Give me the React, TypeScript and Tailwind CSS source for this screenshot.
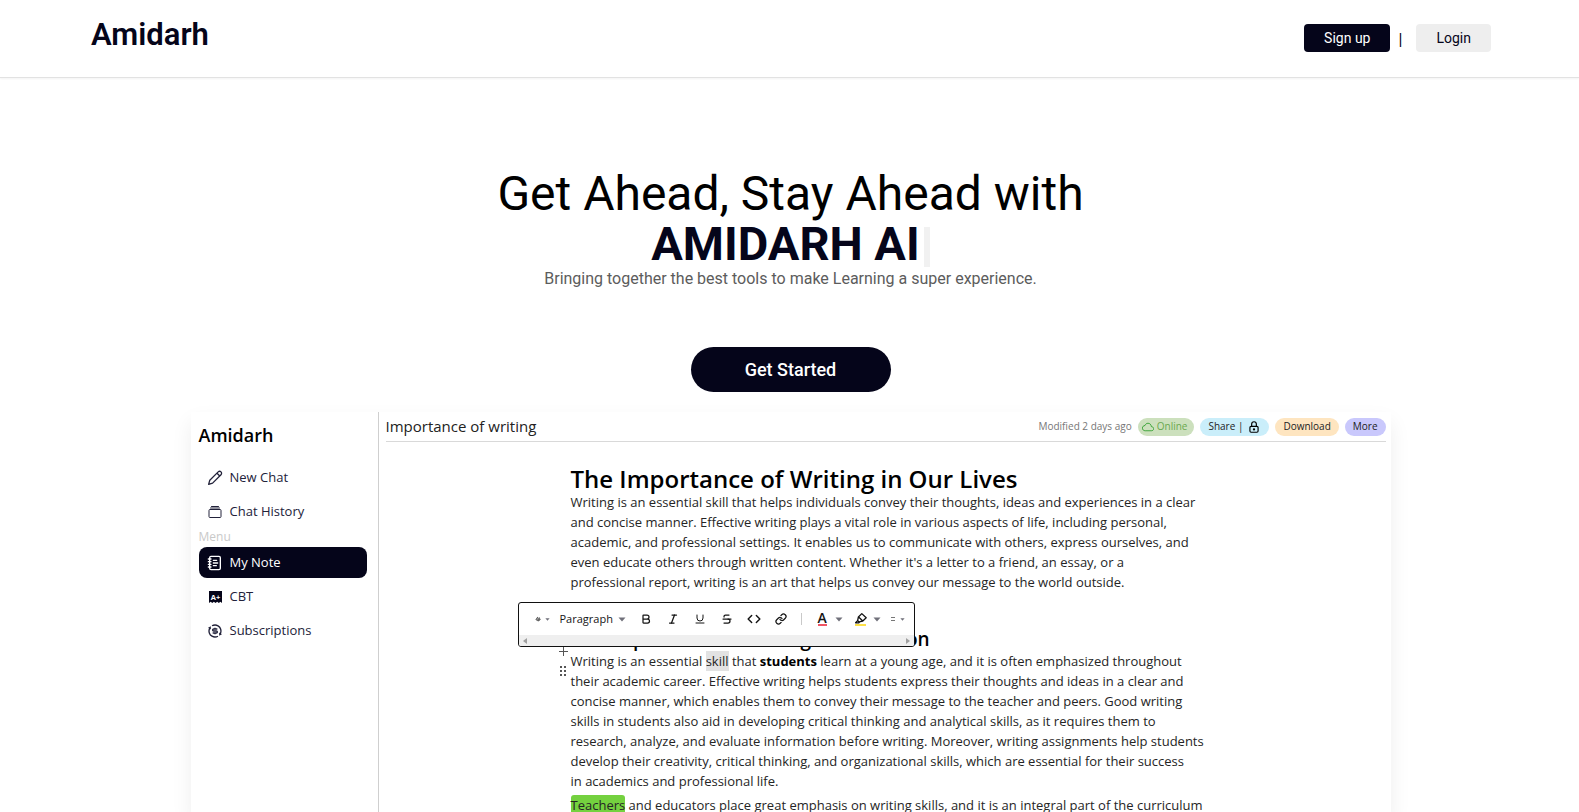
import type { ReactNode } from 'react';
import { IoAlbumsOutline, IoCloudOutline } from 'react-icons/io5';
import { RiExchangeDollarLine } from 'react-icons/ri';
import { TbLock } from 'react-icons/tb';
import { LuBold, LuCode, LuItalic, LuLink, LuNotebookText, LuStrikethrough, LuUnderline } from 'react-icons/lu';

function PencilIcon() {
  return (
    <svg viewBox="0 0 16 16" className="size-4" fill="none" stroke="currentColor" strokeWidth="1.3" strokeLinejoin="round" aria-hidden="true">
      <path d="M11.2 1.9a1.9 1.9 0 0 1 2.8 2.8L5.600 13.100 1.600 14.400 2.800 10.300z" />
      <path d="M10 3.200l2.800 2.800" />
    </svg>
  );
}

function GradeIcon() {
  return (
    <svg viewBox="0 0 16 16" className="size-4" aria-hidden="true">
      <path d="M2 2h13v12l-1.600-1.200-1.600 1.200-1.600-1.200L8.500 14l-1.600-1.200L5.300 14l-1.600-1.200L2 14z" fill="#05051a" />
      <text x="8.500" y="10.500" textAnchor="middle" fontSize="7.500" fontWeight="700" fill="#fff" fontFamily="Open Sans, sans-serif">A+</text>
    </svg>
  );
}

function HighlighterIcon() {
  return (
    <svg viewBox="0 0 16 16" className="size-4" aria-hidden="true">
      <path
        d="M4.600 9.600 5.400 6l3.400-3.400 4.400 4.200-3.400 3.200-3.600.8M5.600 6l4.200 4M2.600 11.800l2-2.200 1.800 1.600-.8.700z"
        fill="none"
        stroke="#111"
        strokeWidth="1.300"
        strokeLinejoin="round"
      />
      <path d="M2 13h11v2H2z" fill="#fde047" />
    </svg>
  );
}

function Caret({ small = false }: { small?: boolean }) {
  return (
    <svg viewBox="0 0 8 5" className={small ? 'h-[3px] w-[5px]' : 'h-[5px] w-2'} aria-hidden="true">
      <path d="M.5.500h7L4 4.500z" fill="#70707a" />
    </svg>
  );
}

function SideItem({ icon, label, active = false }: { icon: ReactNode; label: string; active?: boolean }) {
  return (
    <li>
      <a
        href="#"
        className={
          active
            ? 'flex h-[31px] items-center gap-[7px] rounded-lg bg-[#05051a] px-2 text-white'
            : 'flex h-[31px] items-center gap-[7px] px-2 text-[#22223a]'
        }
      >
        {icon}
        {label}
      </a>
    </li>
  );
}

function Tool({ label, children }: { label: string; children: ReactNode }) {
  return (
    <button type="button" aria-label={label} className="flex h-6 w-[27px] items-center justify-center">
      {children}
    </button>
  );
}

function Toolbar() {
  return (
    <div className="absolute top-[137px] -left-[53px] w-[397px] overflow-hidden rounded-[3px] border border-[#111] bg-white text-[#151515]">
      <div className="flex h-8 items-center pl-4">
        <button type="button" aria-label="Style" className="flex items-center gap-1">
          <svg viewBox="0 0 6 6" className="size-1.5" aria-hidden="true">
            <path d="M.8 3.800 3 1.200M1.800 4.800 4.800 1.600M3.200 5.200 5.400 3" stroke="#555" strokeWidth="1.100" />
          </svg>
          <Caret small />
        </button>
        <button type="button" className="ml-2.5 flex w-[66px] items-center justify-between text-[11px]">
          Paragraph
          <Caret />
        </button>
        <div className="ml-[7px] flex items-center">
          <Tool label="Bold"><LuBold className="size-3" strokeWidth={2.500} /></Tool>
          <Tool label="Italic"><LuItalic className="size-3" strokeWidth={2.500} /></Tool>
          <Tool label="Underline"><LuUnderline className="size-3" /></Tool>
          <Tool label="Strikethrough"><LuStrikethrough className="size-3" strokeWidth={2.500} /></Tool>
          <Tool label="Code"><LuCode className="size-3.5" strokeWidth={2.500} /></Tool>
          <Tool label="Link"><LuLink className="size-3" strokeWidth={2.500} /></Tool>
        </div>
        <span className="ml-1.5 h-3 w-px bg-[#c9c9c9]" />
        <button type="button" aria-label="Text colour" className="ml-4 flex items-center gap-2">
          <span className="border-b-2 border-[#ef5565] text-sm leading-3 font-semibold">A</span>
          <Caret />
        </button>
        <button type="button" aria-label="Highlight" className="ml-2.5 flex items-center gap-1">
          <HighlighterIcon />
          <Caret />
        </button>
        <button type="button" aria-label="Alignment" className="ml-2.5 flex items-center gap-1">
          <svg viewBox="0 0 5 4" className="h-1 w-[5px]" aria-hidden="true">
            <path d="M0 .5h4M0 3.500h4" stroke="#777" />
          </svg>
          <Caret small />
        </button>
      </div>
      <div className="flex h-[11px] items-center justify-between bg-[#efefef] px-1" aria-hidden="true">
        <svg viewBox="0 0 4 6" className="h-1.5 w-1"><path d="M4 0v6L0 3z" fill="#a0a0a0" /></svg>
        <svg viewBox="0 0 4 6" className="h-1.5 w-1"><path d="M0 0v6l4-3z" fill="#a0a0a0" /></svg>
      </div>
    </div>
  );
}

function Handles() {
  return (
    <div className="absolute top-[182px] -left-3 flex flex-col items-center gap-2.5" aria-hidden="true">
      <svg viewBox="0 0 9 9" className="size-[9px]"><path d="M4.500 0v9M0 4.500h9" stroke="#555" /></svg>
      <svg viewBox="0 0 6 10" className="h-2.5 w-1.5" fill="#555">
        <path d="M0 0h2v2H0zM4 0h2v2H4zM0 4h2v2H0zM4 4h2v2H4zM0 8h2v2H0zM4 8h2v2H4z" />
      </svg>
    </div>
  );
}

function Lines({ lines }: { lines: string[] }) {
  return (
    <>
      {lines.map((line) => (
        <span key={line} className="block">{line}</span>
      ))}
    </>
  );
}

const intro = [
  'Writing is an essential skill that helps individuals convey their thoughts, ideas and experiences in a clear',
  'and concise manner. Effective writing plays a vital role in various aspects of life, including personal,',
  'academic, and professional settings. It enables us to communicate with others, express ourselves, and',
  "even educate others through written content. Whether it's a letter to a friend, an essay, or a",
  'professional report, writing is an art that helps us convey our message to the world outside.',
];

const education = [
  'their academic career. Effective writing helps students express their thoughts and ideas in a clear and',
  'concise manner, which enables them to convey their message to the teacher and peers. Good writing',
  'skills in students also aid in developing critical thinking and analytical skills, as it requires them to',
  'research, analyze, and evaluate information before writing. Moreover, writing assignments help students',
  'develop their creativity, critical thinking, and organizational skills, which are essential for their success',
  'in academics and professional life.',
];

function Preview() {
  return (
    <section className="mx-auto mt-5 flex max-w-[1200px] bg-white font-['Open_Sans',sans-serif] shadow-[0_10px_20px_rgba(0,0,0,0.07)]">
      <aside className="w-[188px] shrink-0 border-r border-[#cfcfcf] pr-[11px] pl-2 text-[13px]">
        <h2 className="pt-2 text-lg leading-[30px] font-semibold text-black">Amidarh</h2>
        <ul className="mt-3 flex flex-col gap-[3px]">
          <SideItem icon={<PencilIcon />} label="New Chat" />
          <SideItem icon={<IoAlbumsOutline className="size-4" />} label="Chat History" />
        </ul>
        <p className="text-xs leading-5 text-[#c9c9c9]">Menu</p>
        <ul className="flex flex-col gap-[3px]">
          <SideItem active icon={<LuNotebookText className="size-4" />} label="My Note" />
          <SideItem icon={<GradeIcon />} label="CBT" />
          <SideItem icon={<RiExchangeDollarLine className="size-4" />} label="Subscriptions" />
        </ul>
      </aside>
      <div className="min-w-0 grow pr-[5px] pl-[7px]">
        <header className="flex h-[30px] items-center justify-between border-b border-[#d9d9d9] text-[10px] text-[#222]">
          <h2 className="text-[15px] text-[#222]">Importance of writing</h2>
          <div className="flex items-center gap-1.5">
            <span className="text-[#777]">Modified 2 days ago</span>
            <span className="flex h-[18px] items-center gap-[3px] rounded-full bg-[#cce0bd] pr-[7px] pl-1 text-[#6aa84f]">
              <IoCloudOutline className="size-3 text-[#159415]" />
              Online
            </span>
            <button type="button" className="flex h-[18px] items-center gap-1 rounded-full bg-[#caeefa] px-2">
              Share |
              <TbLock className="size-[14px] text-black" />
            </button>
            <button type="button" className="h-[18px] rounded-full bg-[#fee5c0] px-2">Download</button>
            <button type="button" className="h-[18px] rounded-full bg-[#c9c8fc] px-2">More</button>
          </div>
        </header>
        <article className="relative mx-auto mt-[23px] max-w-[630px] text-[13px] leading-5 whitespace-nowrap text-[#252525]">
          <h1 className="text-2xl leading-[27px] font-semibold text-black">The Importance of Writing in Our Lives</h1>
          <p><Lines lines={intro} /></p>
          <h2 className="mt-[35px] text-[19px] leading-6 font-semibold text-black">The Importance of Writing in Education</h2>
          <p>
            Writing is an essential <span className="bg-[#e2e2e2] py-px">skill</span> that{' '}
            <strong className="text-black">students</strong> learn at a young age, and it is often emphasized throughout
            <Lines lines={education} />
          </p>
          <p className="mt-1">
            <mark className="rounded-[3px] bg-[#74d13f] py-px text-[#252525]">Teachers</mark> and educators place great emphasis on
            writing skills, and it is an integral part of the curriculum
          </p>
          <Toolbar />
          <Handles />
        </article>
      </div>
    </section>
  );
}

export default function App() {
  return (
    <div className="h-screen overflow-hidden bg-white font-[Roboto,sans-serif] text-[#05051a]">
      <header className="flex h-[78px] items-start justify-between border-b border-[#e2e2e2] pr-[88px] pl-[91px] shadow-xs">
        <a href="#" className="pt-4 text-[31px] leading-[38px] font-semibold">Amidarh</a>
        <nav className="flex pt-6 text-sm">
          <button type="button" className="h-7 rounded bg-[#05051a] px-5 text-white">Sign up</button>
          <span className="w-[26px] pt-1 pr-1.5 text-center text-base leading-6">|</span>
          <button type="button" className="h-7 rounded bg-[#eeeeee] px-5">Login</button>
        </nav>
      </header>
      <main className="pt-[91px] pl-0.5 text-center">
        <h1 className="text-5xl leading-[50px] text-black">
          Get Ahead, Stay Ahead with
          <span className="flex items-center justify-center gap-1 text-[47px] font-bold text-[#05051a]">
            AMIDARH AI
            <span className="mt-1.5 h-10 w-1.5 bg-[#f1f1f1]" />
          </span>
        </h1>
        <p className="text-base leading-5 text-[#5c5c5c]">Bringing together the best tools to make Learning a super experience.</p>
        <button type="button" className="mt-[58px] h-[45px] w-[200px] rounded-full bg-[#05051a] text-lg font-medium text-white">
          Get Started
        </button>
        <div className="text-left">
          <Preview />
        </div>
      </main>
    </div>
  );
}
